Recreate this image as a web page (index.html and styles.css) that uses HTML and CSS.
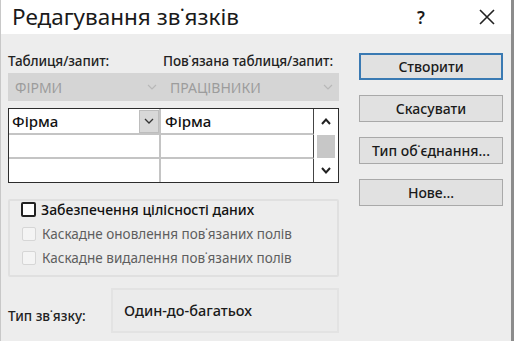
FILE: index.html
```html
<!DOCTYPE html>
<html lang="uk">
<head>
  <meta charset="UTF-8">
  <meta name="viewport" content="width=device-width, initial-scale=1.0">
  <title>Редагування зв'язків</title>
  <link rel="stylesheet" href="styles.css">
</head>
<body>
  <div class="Dialog">
    <div class="Dialog-Title">
      <div class="Dialog-Title-Text">Редагування зв˙язків</div>
      <div class="Dialog-Title-Help">?</div>
      <div class="Dialog-Title-Close">
        <svg width="16" height="16" viewBox="0 0 16 16"><path d="M1 1 L15 15 M15 1 L1 15" stroke="#222" stroke-width="1.6" fill="none"/></svg>
      </div>
    </div>

    <div class="Dialog-Body">
      <div class="Relation">
        <div class="Relation-Labels">
          <div>Таблиця/запит:</div>
          <div>Пов˙язана таблиця/запит:</div>
        </div>

        <div class="Relation-Combos">
          <div class="Combo">
            <span>ФІРМИ</span>
            <svg width="10" height="6" viewBox="0 0 10 6"><path d="M1 1 L5 5 L9 1" stroke="#b8b8b8" stroke-width="1.2" fill="none"/></svg>
          </div>
          <div class="Combo">
            <span>ПРАЦІВНИКИ</span>
            <svg width="10" height="6" viewBox="0 0 10 6"><path d="M1 1 L5 5 L9 1" stroke="#b8b8b8" stroke-width="1.2" fill="none"/></svg>
          </div>
        </div>

        <div class="Fields">
          <div class="Fields-Grid">
            <div class="Fields-Cell">
              <span>Фірма</span>
              <div class="Fields-Drop">
                <svg width="10" height="6" viewBox="0 0 10 6"><path d="M1 1 L5 5 L9 1" stroke="#333" stroke-width="1.3" fill="none"/></svg>
              </div>
            </div>
            <div class="Fields-Cell">Фірма</div>
            <div class="Fields-Cell"></div>
            <div class="Fields-Cell"></div>
            <div class="Fields-Cell"></div>
            <div class="Fields-Cell"></div>
          </div>
          <div class="Fields-Scroll">
            <svg width="10" height="7" viewBox="0 0 10 7"><path d="M1 6 L5 1.5 L9 6" stroke="#222" stroke-width="2" fill="none"/></svg>
            <div class="Fields-Thumb"></div>
            <svg width="10" height="7" viewBox="0 0 10 7"><path d="M1 1 L5 5.5 L9 1" stroke="#222" stroke-width="2" fill="none"/></svg>
          </div>
        </div>

        <div class="Options">
          <label class="Options-Row Options-Row--Main">
            <span class="Check"></span>Забезпечення цілісності даних
          </label>
          <label class="Options-Row Options-Row--Off">
            <span class="Check"></span>Каскадне оновлення пов˙язаних полів
          </label>
          <label class="Options-Row Options-Row--Off">
            <span class="Check"></span>Каскадне видалення пов˙язаних полів
          </label>
        </div>

        <div class="Kind">
          <div class="Kind-Label">Тип зв˙язку:</div>
          <div class="Kind-Value">Один-до-багатьох</div>
        </div>
      </div>

      <div class="Actions">
        <button class="Actions-Btn Actions-Btn--Default">Створити</button>
        <button class="Actions-Btn">Скасувати</button>
        <button class="Actions-Btn">Тип об˙єднання...</button>
        <button class="Actions-Btn">Нове...</button>
      </div>
    </div>
  </div>
</body>
</html>
```

FILE: styles.css
```css
* {
  margin: 0;
  padding: 0;
  box-sizing: border-box;
  font-family: 'Noto Sans', 'Open Sans', sans-serif;
}

body {
  overflow: hidden;
  background-color: #ececec;
}

.Dialog {
  width: 514px;
  height: 341px;
  border-left: 1px solid #c8c8c8;
  border-right: 3px solid #8c8c8c;
  background-color: #ededed;
}

.Dialog-Title {
  height: 34px;
  background-color: #fff;
  display: flex;
  align-items: center;
  padding-left: 11px;
  color: #1a1a1a;
}

.Dialog-Title-Text {
  font-size: 22.5px;
  flex: 1;
  padding-bottom: 1px;
}

.Dialog-Title-Help {
  font-size: 17px;
  font-weight: 600;
  width: 62px;
}

.Dialog-Title-Close {
  width: 32px;
  display: flex;
  align-items: center;
}

.Dialog-Body {
  display: flex;
  padding: 18px 0 0 7px;
}

.Relation {
  width: 331px;
}

.Relation-Labels {
  display: grid;
  grid-template-columns: 155px 176px;
  font-size: 13.5px;
  font-weight: 500;
  color: #222;
  height: 21px;
  line-height: 18px;
  letter-spacing: -0.1px;
}

.Relation-Combos {
  display: grid;
  grid-template-columns: 155px 176px;
  height: 28px;
  background-color: #d5d5d5;
}

.Combo {
  display: flex;
  align-items: center;
  justify-content: space-between;
  padding: 0 6px 0 7px;
  font-size: 14px;
  color: #9c9c9c;
}

.Fields {
  margin-top: 7px;
  height: 75px;
  border: 1px solid #2c2c2c;
  background-color: #fff;
  display: flex;
}

.Fields-Grid {
  width: 305px;
  display: grid;
  grid-template-columns: 152px 153px;
  grid-template-rows: 26px 24px 23px;
}

.Fields-Cell {
  border-right: 2px solid #c4c4c4;
  border-bottom: 2px solid #c4c4c4;
  display: flex;
  align-items: center;
  justify-content: space-between;
  padding-left: 3px;
  font-size: 15px;
  font-weight: 500;
  color: #111;
}

.Fields-Cell:nth-child(2n) {
  border-right: 1px solid #444;
  padding-left: 4px;
}

.Fields-Cell:nth-child(n+5) {
  border-bottom: none;
}

.Fields-Drop {
  width: 20px;
  height: 23px;
  background-color: #d8d8d8;
  border: 1px solid #bdbdbd;
  display: flex;
  align-items: center;
  justify-content: center;
}

.Fields-Scroll {
  flex: 1;
  display: flex;
  flex-direction: column;
  align-items: center;
  justify-content: space-between;
  padding: 9px 3px 8px;
}

.Fields-Thumb {
  width: 18px;
  height: 23px;
  background-color: #c7c7c7;
}

.Options {
  margin-top: 16px;
  height: 78px;
  border: 2px solid #e0e0e0;
  border-radius: 2px;
  display: flex;
  flex-direction: column;
  font-size: 13.5px;
}

.Options-Row {
  display: flex;
  align-items: center;
  height: 24px;
  padding-left: 11px;
}

.Options-Row--Main {
  margin-top: -5px;
  height: 26px;
  color: #111;
  font-weight: 500;
  font-size: 14px;
}

.Options-Row--Off {
  color: #5e5e5e;
  padding-left: 12px;
}

.Check {
  width: 15px;
  height: 15px;
  border: 2px solid #222;
  border-radius: 2px;
  margin-right: 5px;
  background-color: #fff;
}

.Options-Row--Off .Check {
  width: 14px;
  height: 14px;
  border: 1px solid #d6d6d6;
  background-color: #f4f4f4;
  margin-right: 6px;
}

.Kind {
  margin-top: 11px;
  display: flex;
  align-items: center;
}

.Kind-Label {
  width: 103px;
  padding-top: 10px;
  font-size: 13.5px;
  font-weight: 500;
  color: #222;
}

.Kind-Value {
  flex: 1;
  height: 45px;
  border: 2px solid #e3e3e3;
  background-color: #ebebeb;
  display: flex;
  align-items: center;
  padding-left: 11px;
  padding-bottom: 2px;
  font-size: 14.5px;
  font-weight: 500;
  color: #1a1a1a;
}

.Actions {
  margin-left: 20px;
  padding-top: 1px;
  width: 144px;
  display: flex;
  flex-direction: column;
  gap: 15px;
}

.Actions-Btn {
  height: 27px;
  border: 1px solid #a9a9a9;
  background-color: #e1e1e1;
  font-size: 14px;
  font-weight: 500;
  color: #1a1a1a;
}

.Actions-Btn--Default {
  border: 2px solid #3a7ab3;
}
```
